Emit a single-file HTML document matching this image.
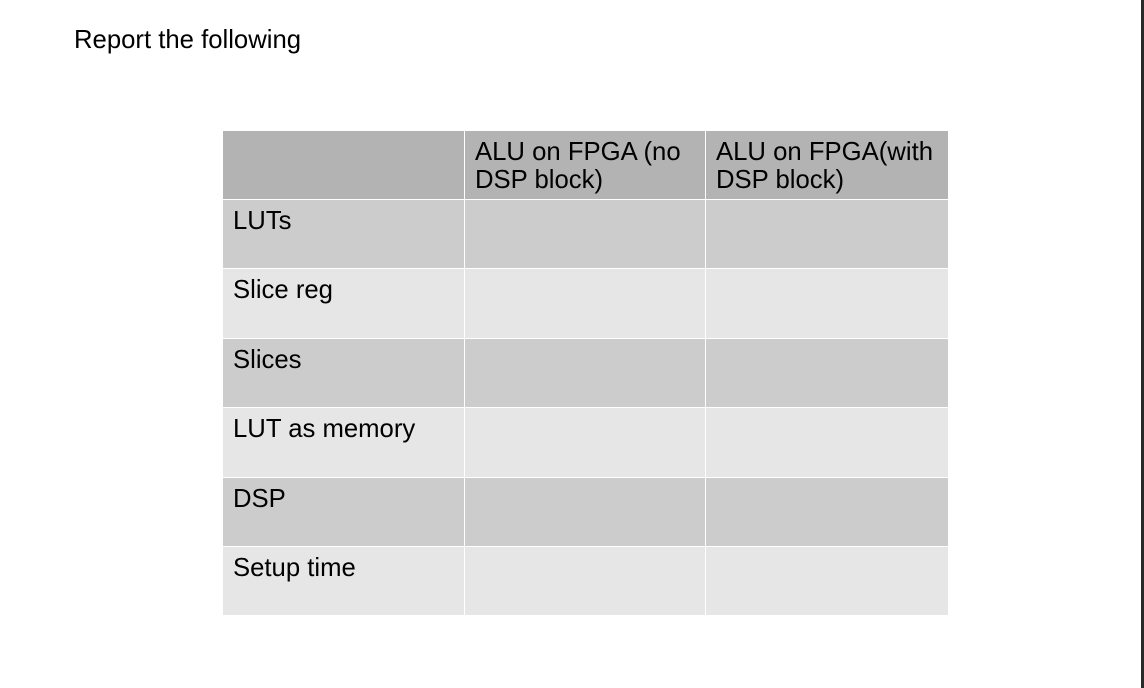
<!DOCTYPE html>
<html><head><meta charset="utf-8"><style>
html,body{margin:0;padding:0;background:#fff;width:1144px;height:688px;overflow:hidden;position:relative;font-family:"Liberation Sans",sans-serif;color:#000}
.bar{position:absolute;left:1141px;top:0;width:3px;height:688px;background:#2a2a2a}
.title{position:absolute;left:74px;top:26px;font-size:25.7px;line-height:28px}
.c{position:absolute;box-sizing:border-box;font-size:25.7px;line-height:28px;padding:7px 0 0 10px}
.h{background:#b3b3b3}.d{background:#cccccc}.l{background:#e6e6e6}
</style></head><body>
<div class="bar"></div>
<div class="title">Report the following</div>
<div class="c h" style="left:223px;top:131px;width:241px;height:68px"></div>
<div class="c h" style="left:465px;top:131px;width:240px;height:68px">ALU on FPGA (no<br>DSP block)</div>
<div class="c h" style="left:706px;top:131px;width:242px;height:68px">ALU on FPGA(with<br>DSP block)</div>

<div class="c d" style="left:223px;top:200px;width:241px;height:68px">LUTs</div>
<div class="c d" style="left:465px;top:200px;width:240px;height:68px"></div>
<div class="c d" style="left:706px;top:200px;width:242px;height:68px"></div>

<div class="c l" style="left:223px;top:269px;width:241px;height:69px">Slice reg</div>
<div class="c l" style="left:465px;top:269px;width:240px;height:69px"></div>
<div class="c l" style="left:706px;top:269px;width:242px;height:69px"></div>

<div class="c d" style="left:223px;top:339px;width:241px;height:68px">Slices</div>
<div class="c d" style="left:465px;top:339px;width:240px;height:68px"></div>
<div class="c d" style="left:706px;top:339px;width:242px;height:68px"></div>

<div class="c l" style="left:223px;top:408px;width:241px;height:69px">LUT as memory</div>
<div class="c l" style="left:465px;top:408px;width:240px;height:69px"></div>
<div class="c l" style="left:706px;top:408px;width:242px;height:69px"></div>

<div class="c d" style="left:223px;top:478px;width:241px;height:68px">DSP</div>
<div class="c d" style="left:465px;top:478px;width:240px;height:68px"></div>
<div class="c d" style="left:706px;top:478px;width:242px;height:68px"></div>

<div class="c l" style="left:223px;top:547px;width:241px;height:68px">Setup time</div>
<div class="c l" style="left:465px;top:547px;width:240px;height:68px"></div>
<div class="c l" style="left:706px;top:547px;width:242px;height:68px"></div>
</body></html>
